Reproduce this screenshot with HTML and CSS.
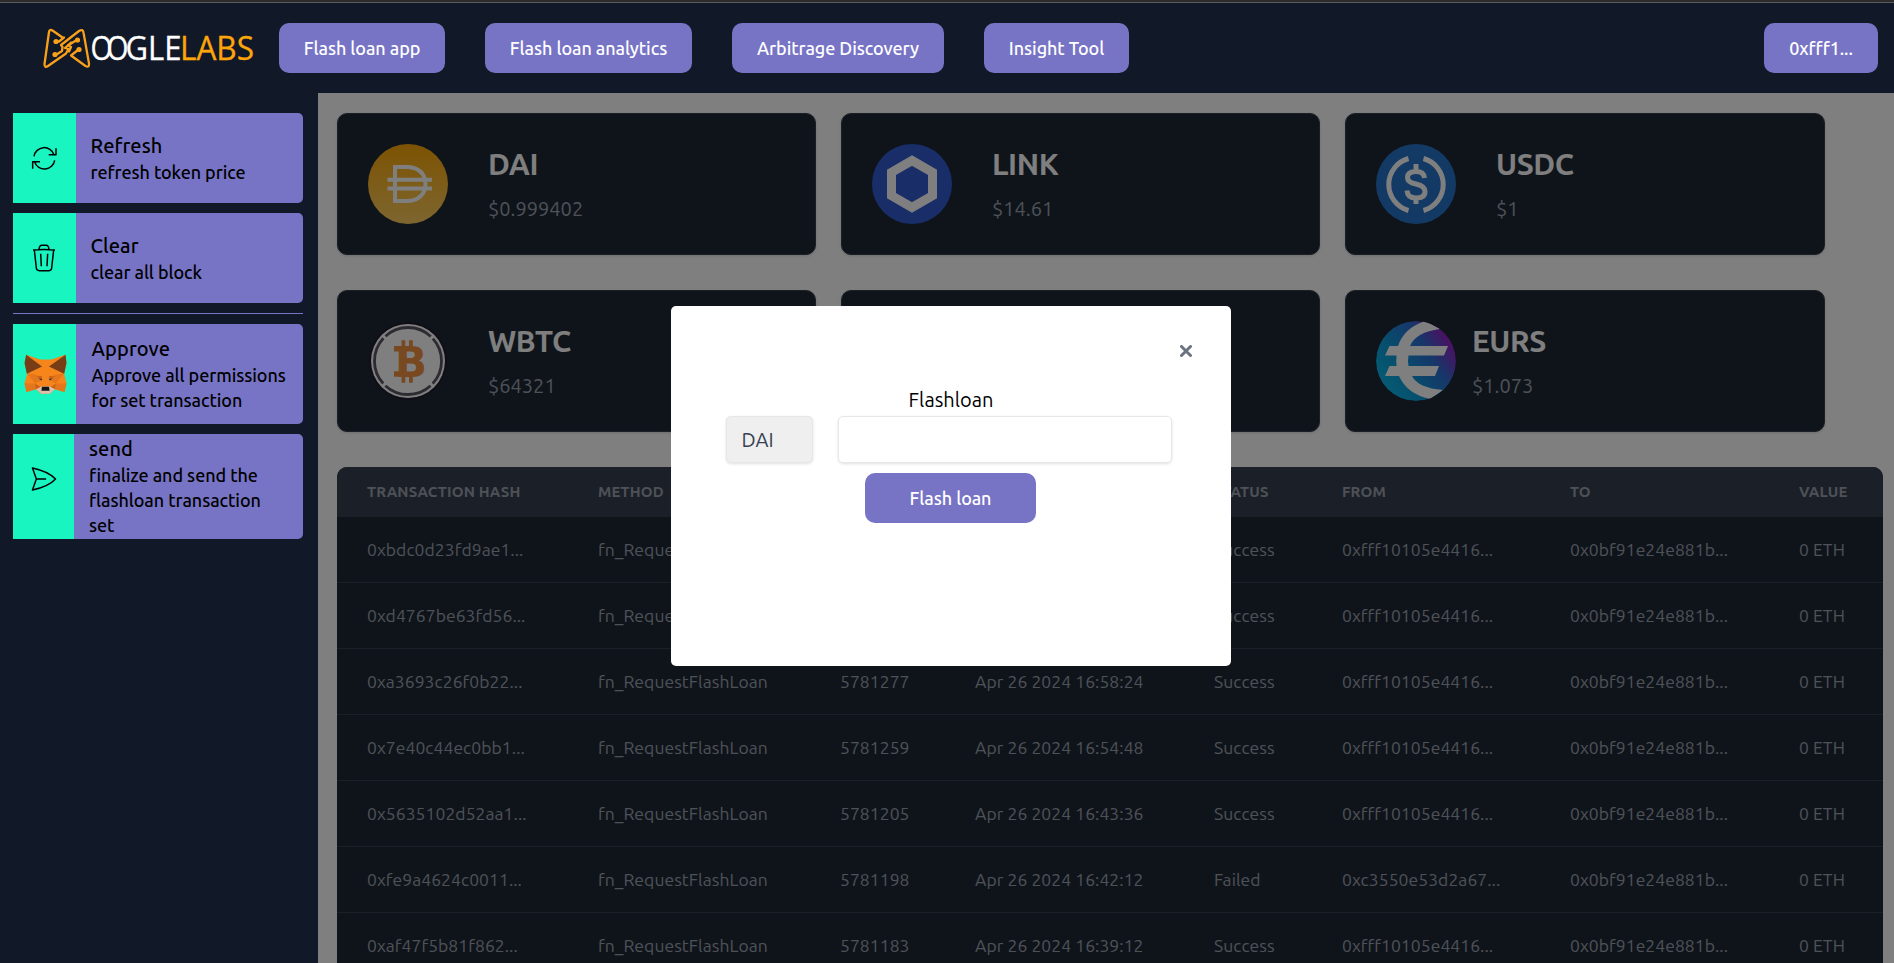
FILE: index.html
```html
<!DOCTYPE html>
<html lang="en">
<head>
<meta charset="utf-8">
<title>Flash loan app</title>
<link rel="stylesheet" href="styles.css">
</head>
<body>
<div class="topline"></div>
<header class="navbar">
  <svg class="logo" viewBox="0 0 216 44" width="216" height="44">
    <g fill="none" stroke="#f9a01b" stroke-width="2.3" stroke-linejoin="round" stroke-linecap="round">
      <path d="M20.500 11.500 10.500 4.500Q7.500 3 7 6L2.500 38Q2.500 42.500 6 40L24 27.500 26.500 23 23 22 29 16.500"/>
      <path d="M14.500 15.500 17 15.500 22 11.500M14.500 28.500 20 25 20.500 21 19 19 37 5Q41 2.500 41.500 6.500L47 37.500Q47.500 42 43.500 40L29 29.500 36 24M27 25.500 29 21 26 19.500 35.500 13.500"/>
    </g>
    <g fill="#f9a01b"><circle cx="14" cy="15.500" r="2.600"/><circle cx="13" cy="28.500" r="2.600"/><circle cx="35.500" cy="14" r="2.600"/><circle cx="37" cy="23.500" r="2.600"/></g>
    <g class="logo-text">
      <text x="48.500" y="34" textLength="22" lengthAdjust="spacingAndGlyphs">O</text>
      <text x="64.500" y="34" textLength="22" lengthAdjust="spacingAndGlyphs">O</text>
      <text x="83.500" y="34" textLength="56" lengthAdjust="spacingAndGlyphs">GLE</text>
      <text class="logo-accent" x="138" y="34" textLength="74" lengthAdjust="spacingAndGlyphs">LABS</text>
    </g>
  </svg>
  <nav class="nav">
    <a class="btn w-app">Flash loan app</a>
    <a class="btn w-analytics">Flash loan analytics</a>
    <a class="btn w-arbitrage">Arbitrage Discovery</a>
    <a class="btn w-insight">Insight Tool</a>
  </nav>
  <a class="btn w-wallet">0xfff1...</a>
</header>
<div class="body">
  <aside class="sidebar">
    <div class="action">
      <div class="action-icon"><svg class="line-icon" viewBox="92 137 81 75" width="27" height="25"><path d="M101 168A31 31 0 0 1 161 163M167 144V163H145M163 180A31 31 0 0 1 103 185M97 205V184H119"/></svg></div>
      <div class="action-text"><h4>Refresh</h4><p>refresh token price</p></div>
    </div>
    <div class="action">
      <div class="action-icon"><svg class="line-icon" viewBox="96 432 72 84" width="24" height="28"><path d="M99 450Q132 447 165 450M117 448Q118 436 126 436H138Q146 436 147 448M103 450 109 504Q110 512 118 512H147Q154 512 155 504L161 450M122 461 124 499M143 461 141 499"/></svg></div>
      <div class="action-text"><h4>Clear</h4><p>clear all block</p></div>
    </div>
    <hr class="rule">
    <div class="action approve">
      <div class="action-icon"><svg class="fox" viewBox="72 131 129 121" width="43" height="40">
        <path fill="#f6851b" d="M78 133 120 148H154L197 133 200 160 193 190 200 220 194 246 165 238 150 251H122L107 238 79 246 73 220 81 190 74 160Z"/>
        <path fill="#e4761b" d="M79 246 73 220H105L107 238ZM194 246 200 220H168L165 238ZM81 190 105 193 127 209 105 220ZM193 190 168 193 147 209 168 220Z"/>
        <path fill="#763d16" d="M78 133 126 169 80 191 73 158ZM197 133 147 169 193 191 200 158Z"/>
        <path fill="#cd6116" d="M107 197 127 198 127 208ZM167 197 147 198 147 208ZM105 220 122 231 107 238ZM168 220 152 231 165 238Z"/>
        <path fill="#f6851b" d="M126 150H147V230H126Z"/>
        <path fill="#233447" d="M115 204 127 207 124 211ZM159 204 147 207 150 211Z"/>
        <path fill="#d7c1b3" d="M108 238 125 229H149L165 238 149 251H124Z"/>
        <path fill="#161616" d="M126 230H147L149 242H124Z"/>
      </svg></div>
      <div class="action-text"><h4>Approve</h4><p>Approve all permissions for set transaction</p></div>
    </div>
    <div class="action send">
      <div class="action-icon"><svg class="line-icon" viewBox="94 467 79 80" width="26" height="26"><path d="M98 473Q148 484 169 507 148 530 98 541L110 507ZM110 507H140"/></svg></div>
      <div class="action-text"><h4>send</h4><p>finalize and send the flashloan transaction set</p></div>
    </div>
  </aside>
  <main class="main">
    <section class="cards">
      <article class="card">
        <svg class="coin" viewBox="0 0 80 80"><defs><linearGradient id="dai" x2="0" y2="1"><stop stop-color="#f9a606"/><stop offset="1" stop-color="#fbcc5f"/></linearGradient></defs><circle cx="40" cy="40" r="40" fill="url(#dai)"/><path d="M27 23H41Q57 25 57.500 40 57 55 41 57H27ZM19.500 35.700H64M19.500 44.600H64" fill="none" stroke="#fff" stroke-width="4"/></svg>
        <div class="quote"><h2>DAI</h2><p>$0.999402</p></div>
      </article>
      <article class="card">
        <svg class="coin" viewBox="0 0 80 80"><circle cx="40" cy="40" r="40" fill="#335dd2"/><path d="M40 16.500 60.500 28.300V51.700L40 63.500 19.500 51.700V28.300Z" fill="none" stroke="#fff" stroke-width="9"/></svg>
        <div class="quote"><h2>LINK</h2><p>$14.61</p></div>
      </article>
      <article class="card">
        <svg class="coin" viewBox="0 0 80 80"><circle cx="40" cy="40" r="40" fill="#2775ca"/><g fill="none" stroke="#fff" stroke-width="5"><path d="M32.500 14.500A27 27 0 0 0 32.500 66.500M47.500 14.500A27 27 0 0 1 47.500 66.500"/><path d="M48.500 34Q48 27.500 40 27.500 31.500 27.500 31.500 33.500 31.500 38.500 40 40 49 42 49 47.500 49 54 40 54 31.500 54 31 46.500M40 20V28M40 53V60"/></g></svg>
        <div class="quote"><h2>USDC</h2><p>$1</p></div>
      </article>
      <article class="card">
        <svg class="coin" viewBox="0 0 80 80"><circle cx="40" cy="40" r="39" fill="#201a2d"/><circle cx="40" cy="40" r="37" fill="#fff"/><circle cx="40" cy="40" r="33.500" fill="none" stroke="#5a5564" stroke-width="2.800" stroke-dasharray="49.600 3" stroke-dashoffset="-27.800"/><g fill="#f09242"><text class="coin-letter" x="27" y="55.700">B</text><path d="M33.500 19.300H37.300V26H33.500ZM41 19.300H44.800V26H41ZM33.500 55H37.300V61.700H33.500ZM41 55H44.800V61.700H41ZM26 25.100H33V30.500H26ZM26 50.300H33V55.700H26Z"/></g></svg>
        <div class="quote"><h2>WBTC</h2><p>$64321</p></div>
      </article>
      <article class="card"></article>
      <article class="card tight">
        <svg class="coin" viewBox="0 0 80 80"><defs><linearGradient id="eurs" x1=".1" y1=".75" x2=".95" y2=".2"><stop stop-color="#0cb4e6"/><stop offset=".3" stop-color="#0e9ad8"/><stop offset=".65" stop-color="#2d6ed4"/><stop offset="1" stop-color="#a516c4"/></linearGradient><clipPath id="disc"><circle cx="40" cy="40" r="40"/></clipPath></defs><g clip-path="url(#disc)"><circle cx="40" cy="40" r="40" fill="url(#eurs)"/><path fill="#fff" d="M49 0 64 8Q40 11 34 25H72L68 34.500H32.500Q31.500 40 32.500 45H63L59 55H36Q42 67 67 69L54 78Q31 73 23 55H9L13.500 45H20.500Q20 40 20.500 34.500H9L13.500 25H22Q28 7 49 0Z"/></g></svg>
        <div class="quote"><h2>EURS</h2><p>$1.073</p></div>
      </article>
    </section>
    <table class="tx">
      <colgroup><col class="c1"><col class="c2"><col class="c3"><col class="c4"><col class="c5"><col class="c6"><col class="c7"><col class="c8"></colgroup>
      <thead><tr><th>TRANSACTION HASH</th><th>METHOD</th><th></th><th></th><th>STATUS</th><th>FROM</th><th>TO</th><th>VALUE</th></tr></thead>
      <tbody>
        <tr><td>0xbdc0d23fd9ae1...</td><td>fn_RequestFlashLoan</td><td></td><td></td><td>Success</td><td>0xfff10105e4416...</td><td>0x0bf91e24e881b...</td><td>0 ETH</td></tr>
        <tr><td>0xd4767be63fd56...</td><td>fn_RequestFlashLoan</td><td></td><td></td><td>Success</td><td>0xfff10105e4416...</td><td>0x0bf91e24e881b...</td><td>0 ETH</td></tr>
        <tr><td>0xa3693c26f0b22...</td><td>fn_RequestFlashLoan</td><td>5781277</td><td>Apr 26 2024 16:58:24</td><td>Success</td><td>0xfff10105e4416...</td><td>0x0bf91e24e881b...</td><td>0 ETH</td></tr>
        <tr><td>0x7e40c44ec0bb1...</td><td>fn_RequestFlashLoan</td><td>5781259</td><td>Apr 26 2024 16:54:48</td><td>Success</td><td>0xfff10105e4416...</td><td>0x0bf91e24e881b...</td><td>0 ETH</td></tr>
        <tr><td>0x5635102d52aa1...</td><td>fn_RequestFlashLoan</td><td>5781205</td><td>Apr 26 2024 16:43:36</td><td>Success</td><td>0xfff10105e4416...</td><td>0x0bf91e24e881b...</td><td>0 ETH</td></tr>
        <tr><td>0xfe9a4624c0011...</td><td>fn_RequestFlashLoan</td><td>5781198</td><td>Apr 26 2024 16:42:12</td><td>Failed</td><td>0xc3550e53d2a67...</td><td>0x0bf91e24e881b...</td><td>0 ETH</td></tr>
        <tr><td>0xaf47f5b81f862...</td><td>fn_RequestFlashLoan</td><td>5781183</td><td>Apr 26 2024 16:39:12</td><td>Success</td><td>0xfff10105e4416...</td><td>0x0bf91e24e881b...</td><td>0 ETH</td></tr>
      </tbody>
    </table>
    <div class="overlay"></div>
  </main>
</div>
<div class="modal">
  <div class="modal-head"><svg viewBox="0 0 12 12" width="12" height="12"><path d="M1.500 1.500 10.500 10.500M10.500 1.500 1.500 10.500"/></svg></div>
  <div class="modal-title">Flashloan</div>
  <div class="fields"><div class="field token">DAI</div><div class="field amount"></div></div>
  <a class="btn w-submit">Flash loan</a>
</div>
</body>
</html>
```
FILE: styles.css
```css
* { box-sizing: border-box; margin: 0; padding: 0; }
html, body { height: 963px; overflow: hidden; }
body {
  display: flex;
  flex-direction: column;
  position: relative;
  background: #111827;
  font-family: "Ubuntu", "Noto Sans", sans-serif;
  font-size: 18px;
  color: #000;
}
.topline { flex: none; height: 3px; background: #2c2c2c; border-bottom: 1px solid #5a5a5a; }
.navbar { flex: none; height: 90px; display: flex; align-items: center; padding: 0 16px 0 42px; }
.logo { flex: none; margin-right: 21px; }
.logo-text { font: 400 32px "Open Sans", sans-serif; fill: #fff; stroke: #fff; stroke-width: .3; }
.logo-accent { fill: #fca60a; stroke: #fca60a; }
.nav { display: flex; gap: 40px; flex: 1; }
.btn {
  display: flex; align-items: center; justify-content: center;
  height: 50px; border-radius: 10px;
  background: #7774c6; color: #fff;
  font-weight: 500; letter-spacing: -.08px; white-space: nowrap;
}
.w-app { width: 166px; }
.w-analytics { width: 207px; }
.w-arbitrage { width: 212px; }
.w-insight { width: 145px; }
.w-wallet { width: 114px; }
.w-submit { width: 171px; margin: 10px 0 0 194px; }

.body { flex: 1; display: flex; min-height: 0; }
.sidebar { flex: none; width: 318px; padding: 20px 15px 0 13px; display: flex; flex-direction: column; gap: 10px; }
.action { flex: none; display: flex; height: 90px; background: #7774c6; border-radius: 0 5px 5px 0; }
.action-icon { flex: none; width: 63px; background: #18f5c0; display: flex; align-items: center; justify-content: center; padding-right: 1px; }
.action-text { display: flex; flex-direction: column; justify-content: center; padding-left: 14.5px; font-weight: 500; letter-spacing: -.08px; }
.action-text h4 { font-size: 20px; height: 28px; line-height: 28px; font-weight: 500; letter-spacing: .1px; }
.action-text p { font-size: 18px; line-height: 25px; }
.rule { flex: none; border: 0; height: 1px; background: #7774c6; }
.approve { height: 100px; }
.approve .action-icon { padding: 0 0 0 2px; }
.approve .action-text { padding-left: 15.5px; }
.send { height: 105px; }
.send .action-icon { width: 61px; padding: 0 0 16px 0; }
.send .action-text { padding: 0 20px 0 15px; }
.line-icon { fill: none; stroke: #000; stroke-width: 4.5; stroke-linejoin: round; }

.main { flex: 1; position: relative; background: #fff; padding: 20px 11px 0 19px; overflow: hidden; }
.overlay { position: absolute; inset: 0; background: rgba(0, 0, 0, .5); }
.cards { display: grid; grid-template-columns: 479px 479px 480px; grid-auto-rows: 142px; gap: 35px 25px; }
.card {
  display: flex; align-items: center; padding: 0 30px;
  background: #1f2937; border: 1px solid #374151; border-radius: 10px;
  box-shadow: 0 1px 3px rgba(0, 0, 0, .15);
}
.coin { width: 80px; height: 80px; flex: none; }
.coin-letter { font: 700 42px "DejaVu Sans", sans-serif; }
.quote { padding: 0 0 1px 40px; display: flex; flex-direction: column; gap: 10px; }
.tight .quote { padding-left: 16px; }
.quote h2 { font-size: 30px; line-height: 40px; font-weight: 700; letter-spacing: -.4px; color: #fff; }
.quote p { font-size: 20px; line-height: 30px; color: #9ca3af; }

.tx { table-layout: fixed; width: 1546px; margin-top: 35px; border-collapse: separate; border-spacing: 0; background: #1f2937; border-radius: 10px 10px 0 0; overflow: hidden; text-align: left; color: #9ca3af; }
.tx th { height: 50px; padding: 0 0 1px 30px; font-size: 15px; font-weight: 700; letter-spacing: .17px; background: #374151; white-space: nowrap; }
.tx td { height: 66px; padding: 0 0 0 30px; font-size: 17.5px; letter-spacing: .06px; border-bottom: 1px solid #374151; white-space: nowrap; }
.c1 { width: 231px; }
.c2 { width: 242px; }
.c3 { width: 135px; }
.c4 { width: 239px; }
.c5 { width: 128px; }
.c6 { width: 228px; }
.c7 { width: 229px; }
.c8 { width: 114px; }

.modal { position: absolute; left: 671px; top: 306px; width: 560px; height: 360px; background: #fff; border-radius: 5px; display: flex; flex-direction: column; }
.modal-head { display: flex; justify-content: flex-end; padding: 39px 39px 0 0; }
.modal-head path { stroke: #6b7280; stroke-width: 3; stroke-linecap: round; }
.modal-title { margin-top: 29px; height: 30px; line-height: 28px; text-align: center; font-size: 20px; }
.fields { display: flex; gap: 25px; padding-left: 55px; }
.field { height: 47px; border: 1px solid #e5e7eb; border-radius: 5px; box-shadow: 0 1px 3px rgba(0, 0, 0, .12); }
.token { width: 87px; background: #efefef; padding-left: 14.5px; line-height: 45px; font-size: 20px; color: #374151; }
.amount { width: 334px; }
```
